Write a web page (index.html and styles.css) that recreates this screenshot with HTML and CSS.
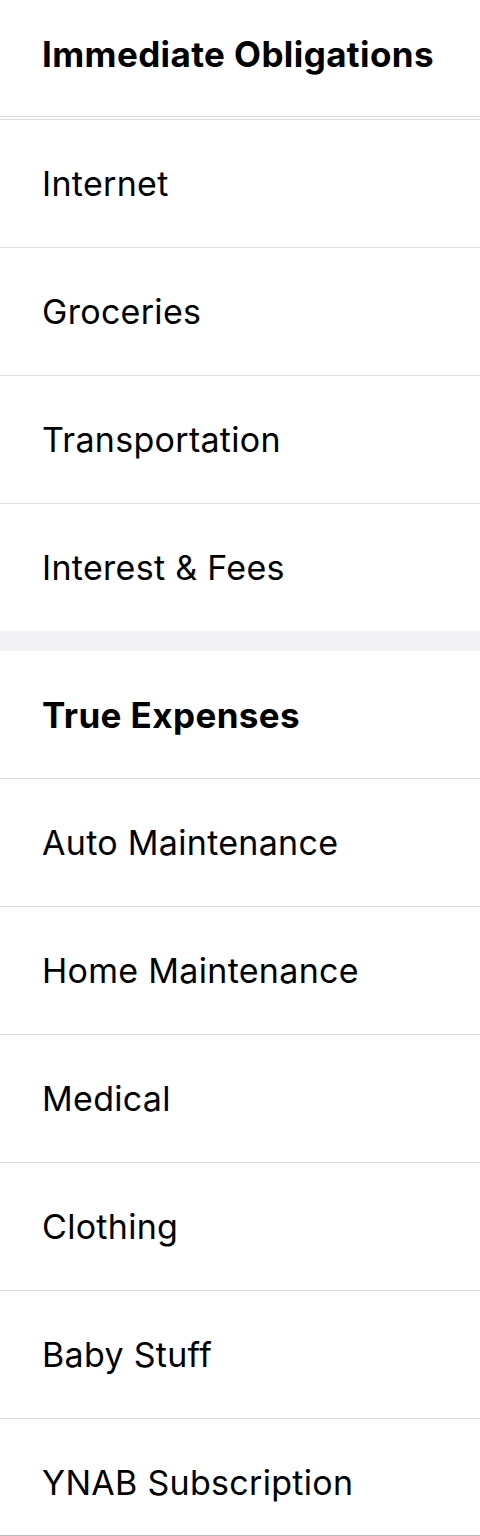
FILE: index.html
```
<!DOCTYPE html>
<html lang="en">
    <head>
        <title>Categories</title>
        <link rel="stylesheet" href="styles.css">
    </head>
    <body>
        <main>
            <section class="group">
                <h2 class="group-title first">Immediate Obligations</h2>
                <ul class="rows">
                    <li>Internet</li>
                    <li>Groceries</li>
                    <li>Transportation</li>
                    <li class="last">Interest &amp; Fees</li>
                </ul>
            </section>
            <div class="spacer"></div>
            <section class="group">
                <h2 class="group-title">True Expenses</h2>
                <ul class="rows">
                    <li>Auto Maintenance</li>
                    <li>Home Maintenance</li>
                    <li>Medical</li>
                    <li>Clothing</li>
                    <li>Baby Stuff</li>
                    <li>YNAB Subscription</li>
                </ul>
            </section>
        </main>
        <div class="tabbar"></div>
    </body>
</html>
```

FILE: styles.css
```
:root {
    --background-primary: white;
    --background-grouped: #f2f2f7;
    --separator: #dedede;
    --separator-dark: #b8b8b8;
    --text-color: black;
}

body {
    margin: 0;
    background-color: var(--background-primary);
    font-family: Inter, "Noto Sans", sans-serif;
    color: var(--text-color);
}

main {
    width: 480px;
}

.group-title {
    margin: 0;
    height: 127px;
    padding-left: 42px;
    display: flex;
    align-items: center;
    font-size: 35px;
    font-weight: 700;
    letter-spacing: 0.4px;
    border-bottom: 1px solid var(--separator);
}

.group-title.first {
    height: 117px;
    padding-bottom: 8px;
    box-sizing: border-box;
    margin-bottom: 2px;
}

.rows {
    list-style: none;
    margin: 0;
    padding: 0;
}

.group-title.first + .rows {
    border-top: 1px solid var(--separator);
}

.rows li {
    height: 127px;
    padding-left: 42px;
    display: flex;
    align-items: center;
    font-size: 34px;
    letter-spacing: 0.3px;
    border-bottom: 1px solid var(--separator);
}

.rows li.last {
    border-bottom: none;
}

.spacer {
    height: 20px;
    background-color: var(--background-grouped);
}

.tabbar {
    position: fixed;
    left: 0;
    right: 0;
    bottom: 0;
    height: 0;
    border-top: 1px solid var(--separator-dark);
}
```
